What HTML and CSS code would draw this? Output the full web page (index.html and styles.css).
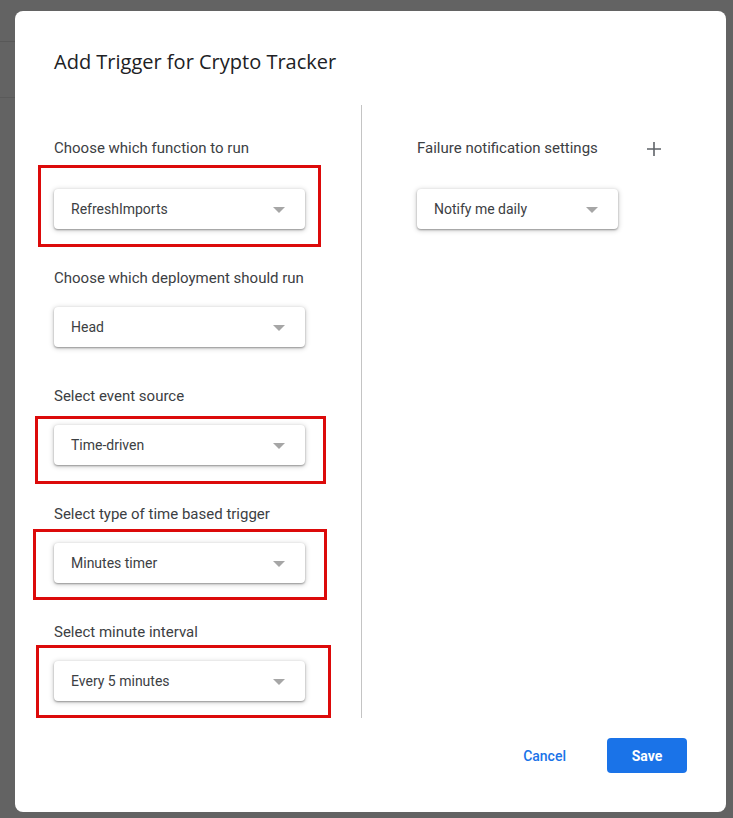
FILE: index.html
```html
<!DOCTYPE html>
<html lang="en">
<head>
<meta charset="utf-8">
<title>Add Trigger for Crypto Tracker</title>
<link rel="stylesheet" href="styles.css">
</head>
<body>
<div class="backdrop">
  <div class="dialog">
    <h1 class="title">Add Trigger for Crypto Tracker</h1>
    <div class="columns">
      <div class="col col-left">
        <div class="field field-first">
          <div class="label">Choose which function to run</div>
          <div class="select mark mark-a"><span>RefreshImports</span><i class="arrow"></i></div>
        </div>
        <div class="field">
          <div class="label">Choose which deployment should run</div>
          <div class="select"><span>Head</span><i class="arrow"></i></div>
        </div>
        <div class="field">
          <div class="label">Select event source</div>
          <div class="select mark mark-b"><span>Time-driven</span><i class="arrow"></i></div>
        </div>
        <div class="field">
          <div class="label">Select type of time based trigger</div>
          <div class="select mark mark-c"><span>Minutes timer</span><i class="arrow"></i></div>
        </div>
        <div class="field">
          <div class="label">Select minute interval</div>
          <div class="select mark mark-d"><span>Every 5 minutes</span><i class="arrow"></i></div>
        </div>
      </div>
      <div class="divider"></div>
      <div class="col col-right">
        <div class="label-row">
          <div class="label">Failure notification settings</div>
          <svg class="plus" width="14" height="14" viewBox="0 0 14 14"><path d="M7 0v14M0 7h14" stroke="#5f6368" stroke-width="1.6" fill="none"/></svg>
        </div>
        <div class="select select-narrow"><span>Notify me daily</span><i class="arrow"></i></div>
      </div>
    </div>
    <div class="footer">
      <button class="btn btn-text">Cancel</button>
      <button class="btn btn-primary">Save</button>
    </div>
  </div>
</div>
</body>
</html>
```
FILE: styles.css
```css
* { box-sizing: border-box; }
html, body { margin: 0; padding: 0; }
body {
  background: #636363;
  width: 733px;
  height: 818px;
  overflow: hidden;
  font-family: Roboto, "Liberation Sans", Arial, sans-serif;
}
.backdrop {
  padding: 11px 0 0 15px;
  height: 818px;
  background:
    linear-gradient(#585858, #585858) 0 41px / 15px 1px no-repeat,
    linear-gradient(#5a5a5a, #5a5a5a) 0 97px / 15px 1px no-repeat,
    #636363;
}
.dialog {
  width: 711px;
  height: 801px;
  background: #fff;
  border-radius: 8px;
  padding: 37px 39px 39px 39px;
  display: flex;
  flex-direction: column;
}
.title {
  margin: 0;
  font-family: "Open Sans", "Noto Sans", sans-serif;
  font-weight: 400;
  font-size: 20px;
  line-height: 28px;
  color: #202124;
}
.columns {
  display: flex;
  margin-top: 29px;
  height: 613px;
}
.col-left {
  width: 307px;
  padding-top: 33px;
  display: flex;
  flex-direction: column;
  gap: 39px;
}
.divider {
  width: 1px;
  background: #c4c4c4;
}
.col-right {
  padding: 33px 0 0 55px;
}
.label {
  font-size: 15px;
  line-height: 20px;
  color: #3c4043;
}
.field .label { margin-bottom: 19px; }
.field-first .label { margin-bottom: 31px; }
.label-row {
  display: flex;
  align-items: center;
  width: 244px;
  justify-content: space-between;
  margin-bottom: 31px;
}
.plus { margin-top: 1px; }
.select {
  position: relative;
  width: 251px;
  height: 40px;
  border-radius: 4px;
  background: #fff;
  box-shadow: 0 1px 2px rgba(0,0,0,0.35), 0 1px 5px 1px rgba(0,0,0,0.16);
  display: flex;
  align-items: center;
  justify-content: space-between;
  padding: 0 20px 0 17px;
  font-size: 14px;
  color: #3c4043;
}
.select-narrow { width: 201px; }
.arrow {
  width: 0;
  height: 0;
  border-left: 6px solid transparent;
  border-right: 6px solid transparent;
  border-top: 6px solid #a6a6a6;
  margin-top: 1px;
}
.mark::after {
  content: "";
  position: absolute;
  border: 3px solid #dc0a0a;
  pointer-events: none;
}
.mark-a::after { left: -16px; right: -16px; top: -24px; bottom: -18px; }
.mark-b::after { left: -19px; right: -21px; top: -9px; bottom: -19px; }
.mark-c::after { left: -21px; right: -22px; top: -14px; bottom: -17px; }
.mark-d::after { left: -18px; right: -26px; top: -16px; bottom: -17px; }
.footer {
  margin-top: auto;
  display: flex;
  justify-content: flex-end;
  align-items: center;
  gap: 25px;
}
.btn {
  font-family: Roboto, "Liberation Sans", sans-serif;
  font-size: 14px;
  font-weight: 500;
  border: none;
  border-radius: 4px;
  height: 35px;
  cursor: pointer;
}
.btn-text {
  background: transparent;
  color: #1a73e8;
  padding: 0 16px;
}
.btn-primary {
  background: #1a73e8;
  color: #fff;
  width: 80px;
  font-weight: 700;
}
```
